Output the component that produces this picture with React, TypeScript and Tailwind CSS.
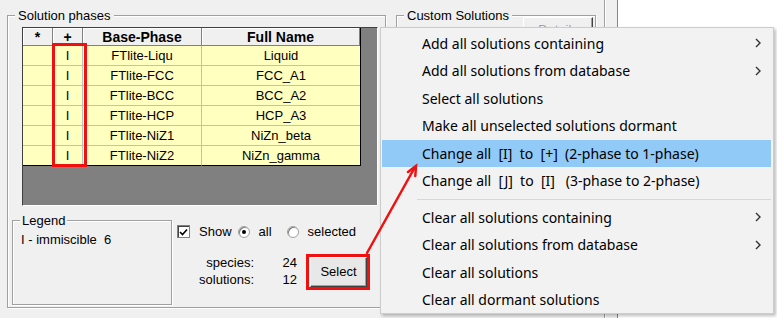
import React from 'react';

const rows = [
  ['FTlite-Liqu', 'Liquid'],
  ['FTlite-FCC', 'FCC_A1'],
  ['FTlite-BCC', 'BCC_A2'],
  ['FTlite-HCP', 'HCP_A3'],
  ['FTlite-NiZ1', 'NiZn_beta'],
  ['FTlite-NiZ2', 'NiZn_gamma'],
];

type MenuEntry = { label: string; sub?: boolean; active?: boolean } | 'sep';

const menu: MenuEntry[] = [
  { label: 'Add all solutions containing', sub: true },
  { label: 'Add all solutions from database', sub: true },
  { label: 'Select all solutions' },
  { label: 'Make all unselected solutions dormant' },
  { label: 'Change all  [I]  to  [+]  (2-phase to 1-phase)', active: true },
  { label: 'Change all  [J]  to  [I]   (3-phase to 2-phase)' },
  'sep',
  { label: 'Clear all solutions containing', sub: true },
  { label: 'Clear all solutions from database', sub: true },
  { label: 'Clear all solutions' },
  { label: 'Clear all dormant solutions' },
];

const dialogFont = "font-['Liberation_Sans',Arial,sans-serif]";

function Chevron() {
  return (
    <svg width="6" height="10" viewBox="0 0 6 10" className="ml-auto">
      <path d="M1 1 L5 5 L1 9" fill="none" stroke="#333" strokeWidth="1.4" />
    </svg>
  );
}

function PhaseGrid() {
  return (
    <div className="relative ml-[14px] mt-[4px] w-[356px] h-[179px] bg-[#808080] border-t border-l border-[#404040] border-b-white border-r-white border-b border-r">
      <div className="grid grid-cols-[30px_30px_119px_158px] w-[338px] border-r border-black">
        {['*', '+', 'Base-Phase', 'Full Name'].map((h) => (
          <div
            key={h}
            className="h-[18px] flex items-center justify-center bg-[#f0f0f0] border-r border-b border-[#808080] shadow-[inset_1px_1px_0_#fff] font-bold text-[14px] leading-none"
          >
            {h}
          </div>
        ))}
        {rows.map(([base, full], i) => {
          const last = i === rows.length - 1;
          const cell = `h-[20px] flex items-center justify-center bg-[#ffffc0] border-r border-b text-[13px] ${
            last ? 'border-b-black border-r-[#c0c0c0]' : 'border-[#c0c0c0]'
          }`;
          return (
            <React.Fragment key={base}>
              <div className={cell}></div>
              <div className={cell}>I</div>
              <div className={cell}>{base}</div>
              <div className={`${cell} border-r-0`}>{full}</div>
            </React.Fragment>
          );
        })}
      </div>
      {/* highlight on the + column */}
      <span className="absolute left-[29px] top-[15px] w-[35px] h-[124px] border-[3px] border-[#f01010]" />
    </div>
  );
}

function Radio({ on }: { on?: boolean }) {
  return (
    <span className="w-[12px] h-[12px] rounded-full border border-[#a0a0a0] bg-white flex items-center justify-center shadow-[inset_1px_1px_0_#808080]">
      {on && <span className="w-[4px] h-[4px] rounded-full bg-black" />}
    </span>
  );
}

export default function App() {
  return (
    <div className={`relative w-[777px] h-[318px] overflow-hidden bg-[#f0f0f0] text-black ${dialogFont}`}>
      <div className="flex h-full">
        {/* solution phases */}
        <fieldset className="ml-[7px] mt-[8px] w-[379px] h-[300px] shrink-0 border border-[#a0a0a0] shadow-[inset_1px_1px_0_#fff,1px_1px_0_#fff]">
          <legend className="ml-[7px] px-[3px] text-[13px] leading-[15px] bg-[#f0f0f0]">Solution phases</legend>
          <PhaseGrid />

          <div className="flex mt-[7px] ml-[4px]">
            <fieldset className="w-[160px] h-[92px] border border-[#a0a0a0] shadow-[inset_1px_1px_0_#fff,1px_1px_0_#fff]">
              <legend className="ml-[7px] px-[2px] text-[13px] leading-[15px] bg-[#f0f0f0]">Legend</legend>
              <div className="mt-[4px] pl-[8px] text-[13px] leading-[15px] whitespace-pre">I - immiscible  6</div>
            </fieldset>

            <div className="ml-[5px] flex flex-col text-[13px]">
              <div className="mt-[11px] h-[15px] flex items-center">
                <span className="w-[13px] h-[13px] bg-white border border-[#808080] shadow-[inset_1px_1px_0_#404040] flex items-center justify-center">
                  <svg width="9" height="8" viewBox="0 0 9 8">
                    <path d="M1 4 L3.5 6.5 L8 1.5" fill="none" stroke="#000" strokeWidth="1.6" />
                  </svg>
                </span>
                <span className="ml-[9px]">Show</span>
                <span className="ml-[6px]"><Radio on /></span>
                <span className="ml-[9px]">all</span>
                <span className="ml-[15px]"><Radio /></span>
                <span className="ml-[9px]">selected</span>
              </div>

              <div className="mt-[15px] flex items-start">
                <div className="grid grid-cols-[77px_43px] leading-[17px] text-right">
                  <span>species:</span>
                  <span>24</span>
                  <span>solutions:</span>
                  <span>12</span>
                </div>
                <div className="relative ml-[13px] mt-[3px]">
                  <button className="w-[57px] h-[30px] bg-[#e8e8e8] border border-t-white border-l-white border-b-[#404040] border-r-[#404040] shadow-[inset_-1px_-1px_0_#a0a0a0] text-[13px]">
                    Select
                  </button>
                  <span className="absolute -left-[4px] -top-[3px] -right-[3px] -bottom-[3px] border-[3px] border-[#f01010]" />
                </div>
              </div>
            </div>
          </div>
        </fieldset>

        {/* custom solutions */}
        <fieldset className="ml-[10px] mt-[8px] w-[200px] h-[300px] shrink-0 border border-[#a0a0a0] shadow-[inset_1px_1px_0_#fff,1px_1px_0_#fff]">
          <legend className="ml-[7px] px-[3px] text-[13px] leading-[15px] bg-[#f0f0f0]">Custom Solutions</legend>
          <div className="flex justify-end -mt-[6px] mr-[2px]">
            <div className="w-[70px] h-[26px] flex items-center justify-center border border-t-white border-l-white border-b-[#404040] border-r-[#404040] shadow-[inset_-1px_-1px_0_#a0a0a0] text-[13px] text-[#a0a0a0] [text-shadow:1px_1px_0_#fff]">
              Details
            </div>
          </div>
        </fieldset>

        <div className="ml-[8px] w-[2px] h-full shrink-0 border-l border-[#a0a0a0] border-r border-r-white" />
        <div className="ml-[11px] flex-1 h-full bg-white border-l border-[#5b8fc7]" />
      </div>

      {/* context menu */}
      <div className="absolute left-[380px] top-[27px] w-[394px] h-[287px] border border-[#cccccc] bg-[#f2f2f2] pt-[1.5px] pl-[1px] pr-[2px] shadow-[2px_2px_3px_rgba(0,0,0,0.25)] font-['Noto_Sans','Open_Sans',sans-serif] text-[14px]">
        {menu.map((m, i) =>
          m === 'sep' ? (
            <div key={i} className="h-[9px] flex items-center pl-[35px]">
              <div className="flex-1 h-px bg-[#d7d7d7]" />
            </div>
          ) : (
            <div
              key={i}
              className={`h-[27.5px] flex items-center pl-[40px] pr-[10px] whitespace-pre ${m.active ? 'bg-[#91c9f7]' : ''}`}
            >
              <span>{m.label}</span>
              {m.sub && <Chevron />}
            </div>
          )
        )}
      </div>

      {/* arrow from Select to the highlighted item */}
      <svg className="absolute left-0 top-0 pointer-events-none" width="777" height="318" viewBox="0 0 777 318">
        <g stroke="#f01010" strokeWidth="2.5" fill="none" strokeLinecap="round">
          <path d="M367 253 L415 167" />
          <path d="M408 172 L416 166 L415.3 176" />
        </g>
      </svg>
    </div>
  );
}
